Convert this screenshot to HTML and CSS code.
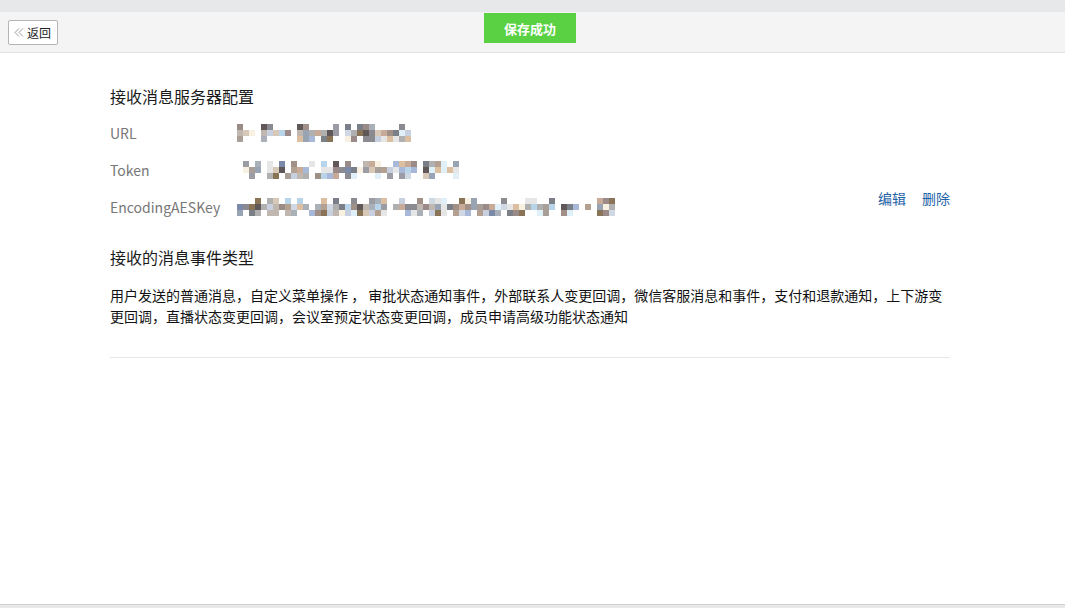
FILE: index.html
```html
<!DOCTYPE html>
<html lang="zh-CN">
<head>
<meta charset="utf-8">
<title>接收消息服务器配置</title>
<link rel="stylesheet" href="styles.css">
</head>
<body>
<div class="top-strip"></div>
<header class="toolbar">
  <button class="back-btn" type="button">
    <svg class="back-icon" width="10" height="9" viewBox="0 0 10 9"><path d="M5 0.5 L1 4.5 L5 8.5 M9 0.5 L5 4.5 L9 8.5" fill="none" stroke="#9a9a9a" stroke-width="1"/></svg>
    <span>返回</span>
  </button>
  <div class="toast">保存成功</div>
</header>
<main class="content">
  <h2 class="section-title">接收消息服务器配置</h2>
  <div class="config">
    <div class="config-list">
      <div class="config-row">
        <span class="config-label">URL</span>
        <span class="mosaic" data-cols="29" data-seed="17"></span>
      </div>
      <div class="config-row">
        <span class="config-label">Token</span>
        <span class="mosaic mosaic-token" data-cols="36" data-seed="4242"></span>
      </div>
      <div class="config-row">
        <span class="config-label">EncodingAESKey</span>
        <span class="mosaic" data-cols="63" data-seed="98765"></span>
      </div>
    </div>
    <div class="config-actions">
      <a class="link" href="#">编辑</a>
      <a class="link" href="#">删除</a>
    </div>
  </div>
  <h2 class="section-title section-title-2">接收的消息事件类型</h2>
  <p class="event-desc">用户发送的普通消息，自定义菜单操作 ， 审批状态通知事件，外部联系人变更回调，微信客服消息和事件，支付和退款通知，上下游变更回调，直播状态变更回调，会议室预定状态变更回调，成员申请高级功能状态通知</p>
  <div class="divider"></div>
</main>
<div class="bottom-bar"></div>
<script src="script.js"></script>
</body>
</html>
```
FILE: styles.css
```css
html, body {
  margin: 0;
  padding: 0;
  background: #ffffff;
  height: 100%;
}
body {
  font-family: "Noto Sans CJK SC", "Noto Sans", sans-serif;
  color: #222;
  display: flex;
  flex-direction: column;
  min-height: 608px;
}
.top-strip {
  height: 12px;
  background: #e7e8ea;
}
.toolbar {
  height: 40px;
  background: #f4f4f4;
  border-bottom: 1px solid #e2e2e2;
  display: flex;
  align-items: flex-start;
  position: relative;
}
.back-btn {
  margin: 8px 0 0 8px;
  width: 50px;
  height: 25px;
  box-sizing: border-box;
  border: 1px solid #b4b4b4;
  border-radius: 2px;
  background: #fff;
  padding: 0 0 0 5px;
  display: flex;
  align-items: center;
  gap: 3px;
  font-family: "Noto Sans CJK SC", sans-serif;
  font-size: 12px;
  color: #222;
  cursor: pointer;
}
.back-icon {
  display: block;
}
.toast {
  position: absolute;
  left: 484px;
  top: 1px;
  width: 92px;
  height: 30px;
  background: #59d142;
  color: #fff;
  font-size: 13px;
  font-weight: bold;
  display: flex;
  align-items: center;
  justify-content: center;
}
.content {
  flex: 1;
  padding: 31px 0 0 110px;
  width: 840px;
}
.section-title {
  margin: 0;
  font-size: 16px;
  line-height: 24px;
  font-weight: normal;
  color: #1a1a1a;
}
.config {
  display: flex;
  justify-content: space-between;
  margin-top: 14px;
}
.config-list {
  display: flex;
  flex-direction: column;
  gap: 15px;
}
.config-row {
  display: flex;
  align-items: center;
  height: 22px;
}
.config-label {
  width: 127px;
  font-size: 14px;
  color: #777;
  line-height: 22px;
}
.mosaic {
  display: block;
  height: 18px;
}
.mosaic svg {
  display: block;
}
.mosaic-token {
  margin-left: 6px;
}
.config-actions {
  align-self: flex-end;
  display: flex;
  gap: 16px;
  margin-bottom: 11px;
}
.link {
  font-size: 14px;
  line-height: 18px;
  color: #1f63a6;
  text-decoration: none;
}
.section-title-2 {
  margin-top: 27px;
}
.event-desc {
  margin: 16px 0 0;
  font-size: 14px;
  line-height: 21px;
  color: #111;
}
.divider {
  margin-top: 30px;
  height: 1px;
  background: #e6e6e6;
}
.bottom-bar {
  height: 3px;
  border-top: 1px solid #d0d0d0;
  background: #e8e8e8;
}
```
FILE: script.js
```js
(function () {
  var palette = [
    '#c8aa98', '#8a8a90', '#b0b0b0', '#7b7f88', '#b8d4e8', '#9a8a88',
    '#dcbfa0', '#8a7458', '#7a8aa8', '#a09088', '#e6e6e6', '#c8d0e0',
    '#a8b8d8', '#d8c8b8', '#f8f0e0', '#e0f0f8', '#605858', '#a8a098',
    '#98a4b4', '#c0b8b0', '#b4a090', '#d0d8e4', '#aab0b8', '#9c9ca4'
  ];
  var ns = 'http://www.w3.org/2000/svg';
  var density = [0.5, 0.97, 0.68];
  document.querySelectorAll('.mosaic').forEach(function (el) {
    var cols = +el.dataset.cols;
    var seed = +el.dataset.seed;
    function rnd() {
      seed = (seed * 16807) % 2147483647;
      return (seed - 1) / 2147483646;
    }
    var svg = document.createElementNS(ns, 'svg');
    svg.setAttribute('width', cols * 6);
    svg.setAttribute('height', 18);
    for (var c = 0; c < cols; c++) {
      var gap = c > 1 && c < cols - 1 && rnd() < 0.06;
      for (var r = 0; r < 3; r++) {
        var v = rnd();
        var force = (c === 0 || c === cols - 1) && r === 1;
        if (!force && (gap || v > density[r])) continue;
        var rect = document.createElementNS(ns, 'rect');
        rect.setAttribute('x', c * 6);
        rect.setAttribute('y', r * 6);
        rect.setAttribute('width', 6);
        rect.setAttribute('height', 6);
        rect.setAttribute('fill', palette[Math.floor(rnd() * palette.length)]);
        svg.appendChild(rect);
      }
    }
    el.appendChild(svg);
  });
})();
```
